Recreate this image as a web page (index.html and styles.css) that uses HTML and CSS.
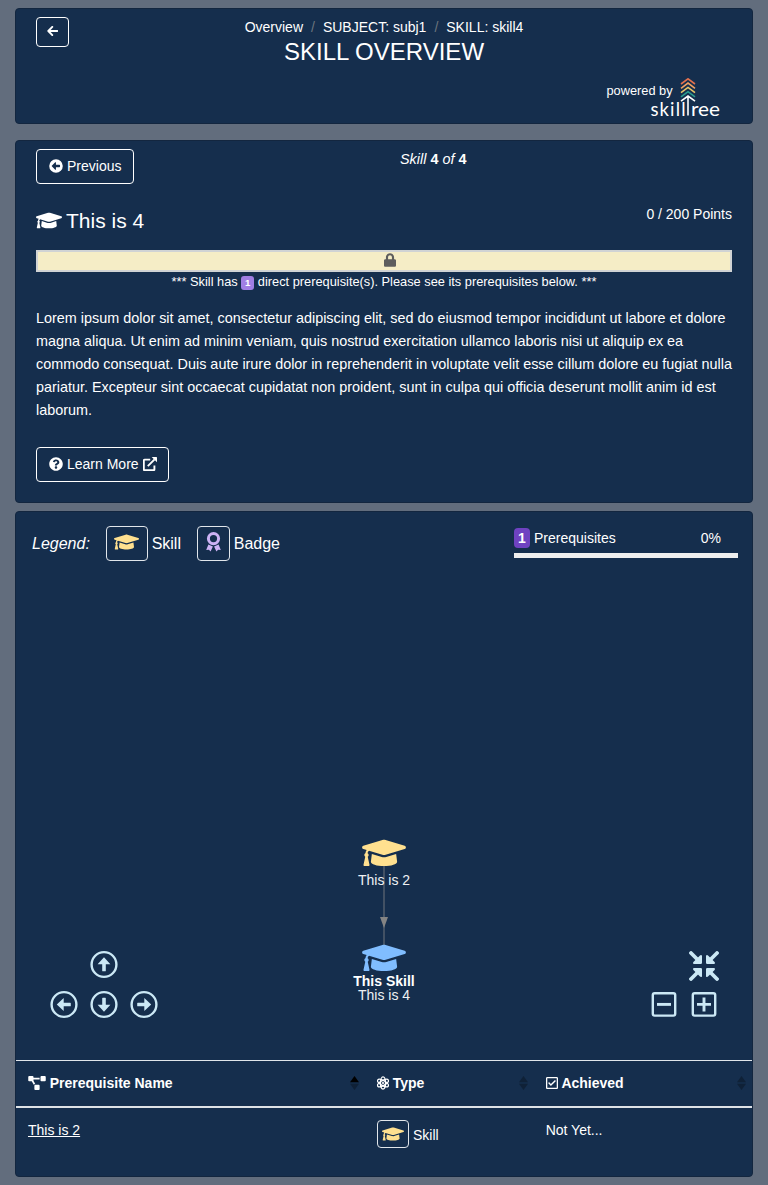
FILE: index.html
```html
<!DOCTYPE html>
<html lang="en">
<head>
<meta charset="utf-8">
<title>Skill Overview</title>
<link rel="stylesheet" href="styles.css">
</head>
<body>
<svg class="defs" aria-hidden="true">
  <symbol id="cap" viewBox="0 0 640 512"><path d="M622.34 153.2L343.4 67.5c-15.2-4.67-31.6-4.67-46.79 0L17.66 153.2c-23.54 7.23-23.54 38.36 0 45.59l48.63 14.94c-10.67 13.19-17.23 29.28-17.88 46.9C38.78 266.15 32 276.11 32 288c0 10.78 5.68 19.85 13.86 25.65L20.33 428.53C18.11 438.52 25.71 448 35.94 448h56.11c10.24 0 17.84-9.48 15.62-19.47L82.14 313.65C90.32 307.85 96 298.78 96 288c0-11.57-6.47-21.25-15.66-26.87.76-15.02 8.44-28.3 20.69-36.72L296.6 284.5c9.06 2.78 26.44 6.25 46.79 0l278.95-85.7c23.55-7.24 23.55-38.36 0-45.6zM352.79 315.09c-28.53 8.76-52.84 3.92-65.59 0l-145.02-44.55L128 384c0 35.35 85.96 64 192 64s192-28.65 192-64l-14.18-113.47-145.03 44.56z"/></symbol>
  <symbol id="circle-arrow" viewBox="0 0 28 28"><circle cx="14" cy="14" r="12.4" fill="none" stroke="currentColor" stroke-width="2.4"/><path d="M6.8 14l6.9-6.4v4.6h6.5q.6 0 .6.6v2.4q0 .6-.6.6h-6.5v4.6z"/></symbol>
</svg>
<main class="page">
  <header class="card header">
    <a class="btn back"><svg width="11" height="10" viewBox="0 0 11 10"><path d="M5.3.9L1.3 5l4 4.1M1.5 5h9" fill="none" stroke="currentColor" stroke-width="1.9" stroke-linecap="round" stroke-linejoin="round"/></svg></a>
    <div class="heading">
      <nav class="crumbs"><span>Overview</span><i>/</i><span>SUBJECT: subj1</span><i>/</i><span>SKILL: skill4</span></nav>
      <h1>SKILL OVERVIEW</h1>
    </div>
    <div class="brand">
      <span>powered by</span>
      <svg width="72" height="40" viewBox="0 0 72 40">
        <g fill="none" stroke-width="1.6">
          <path d="M31 6l7-5.2L45 6" stroke="#e0714f"/>
          <path d="M31 10.3l7-5.2 7 5.2" stroke="#f0a062"/>
          <path d="M31 14.6l7-5.2 7 5.2" stroke="#e8c569"/>
          <path d="M31 18.9l7-5.2 7 5.2" stroke="#2a9d8f"/>
          <path d="M31 23.2l7-5.2 7 5.2M38 18v19.5" stroke="#fff"/>
        </g>
        <text x="0.5" y="37.5" textLength="35" lengthAdjust="spacing">skill</text>
        <text x="41" y="37.5" textLength="29" lengthAdjust="spacingAndGlyphs">ree</text>
      </svg>
    </div>
  </header>

  <section class="card detail">
    <div class="pager">
      <a class="btn"><svg width="14" height="14" viewBox="0 0 512 512"><path fill-rule="evenodd" d="M256 8a248 248 0 1 0 0 496a248 248 0 1 0 0-496zM102 248L228 122q22-16 26 8v80h126q24 0 24 24v44q0 24-24 24H254v80q-4 24-26 8L102 264q-8-8 0-16z"/></svg>Previous</a>
      <div class="position"><em>Skill</em> <b>4</b> <em>of</em> <b>4</b></div>
    </div>
    <div class="title-row">
      <h2><svg width="26" height="21"><use href="#cap"/></svg>This is 4</h2>
      <span>0 / 200 Points</span>
    </div>
    <div class="locked"><svg width="12" height="14" viewBox="0 0 448 512"><path d="M400 224h-24v-72C376 68.2 307.8 0 224 0S72 68.2 72 152v72H48c-26.5 0-48 21.5-48 48v192c0 26.5 21.5 48 48 48h352c26.5 0 48-21.5 48-48V272c0-26.5-21.5-48-48-48zm-104 0H152v-72c0-39.7 32.3-72 72-72s72 32.3 72 72v72z"/></svg></div>
    <p class="lock-note">*** Skill has <span class="count">1</span> direct prerequisite(s). Please see its prerequisites below. ***</p>
    <p class="description">Lorem ipsum dolor sit amet, consectetur adipiscing elit, sed do eiusmod tempor incididunt ut labore et dolore magna aliqua. Ut enim ad minim veniam, quis nostrud exercitation ullamco laboris nisi ut aliquip ex ea commodo consequat. Duis aute irure dolor in reprehenderit in voluptate velit esse cillum dolore eu fugiat nulla pariatur. Excepteur sint occaecat cupidatat non proident, sunt in culpa qui officia deserunt mollit anim id est laborum.</p>
    <a class="btn learn"><svg width="14" height="14" viewBox="0 0 512 512"><path d="M504 256c0 136.997-111.043 248-248 248S8 392.997 8 256C8 119.083 119.043 8 256 8s248 111.083 248 248zM262.655 90c-54.497 0-89.255 22.957-116.549 63.758-3.536 5.286-2.353 12.415 2.715 16.258l34.699 26.31c5.205 3.947 12.621 3.008 16.665-2.122 17.864-22.658 30.113-35.797 57.303-35.797 20.429 0 45.698 13.148 45.698 32.958 0 14.976-12.363 22.667-32.534 33.976C247.128 238.528 216 254.941 216 296v4c0 6.627 5.373 12 12 12h56c6.627 0 12-5.373 12-12v-1.333c0-28.462 83.186-29.647 83.186-106.667 0-58.002-60.165-102-116.531-102zM256 338c-25.365 0-46 20.635-46 46 0 25.364 20.635 46 46 46s46-20.636 46-46c0-25.365-20.635-46-46-46z"/></svg>Learn More<svg width="14" height="14" viewBox="0 0 14 14"><path d="M7.2 2.6H1.6q-.8 0-.8.8v9q0 .8.8.8h9q.8 0 .8-.8V8.6M4.8 9.2L11.6 2.4" fill="none" stroke="currentColor" stroke-width="1.9"/><path d="M8.7 0h4.7q.6 0 .6.6v4.7z"/></svg></a>
  </section>

  <section class="card deps">
    <div class="summary">
      <div class="legend">
        <em>Legend:</em>
        <span class="btn tile skill"><svg width="25" height="20"><use href="#cap"/></svg></span><span>Skill</span>
        <span class="btn tile badge"><svg width="15" height="20" viewBox="0 0 15 20"><circle cx="7.5" cy="6.6" r="5.1" fill="none" stroke="currentColor" stroke-width="3"/><path d="M2.4 12.6l4.5 1.8-2.3 5.1-1.7-1.8-2.7.2zM12.6 12.6l-4.5 1.8 2.3 5.1 1.7-1.8 2.7.2z"/></svg></span><span>Badge</span>
      </div>
      <div class="progress">
        <div class="progress-text"><span class="total">1</span><span>Prerequisites</span><span class="percent">0%</span></div>
        <div class="bar"></div>
      </div>
    </div>

    <div class="graph">
      <svg class="edge" width="10" height="92" viewBox="0 0 10 92"><path d="M5 0v92" stroke="#525e6d" stroke-width="1.5"/><path d="M1 55h8L5 66z" fill="#848484"/></svg>
      <div class="node first"><svg width="44" height="35" viewBox="0 0 44 35"><use href="#cap" y=".4" width="44" height="35"/></svg><span>This is 2</span></div>
      <div class="node second"><svg width="44" height="35" viewBox="0 0 44 35"><use href="#cap" y=".4" width="44" height="35"/></svg><b>This Skill</b><span>This is 4</span></div>
      <div class="pan">
        <svg class="up"><use href="#circle-arrow"/></svg>
        <svg class="left"><use href="#circle-arrow"/></svg>
        <svg class="down"><use href="#circle-arrow"/></svg>
        <svg class="right"><use href="#circle-arrow"/></svg>
      </div>
      <div class="zoom">
        <svg class="fit" width="30" height="30" viewBox="0 0 30 30"><g id="inward"><path d="M2 2l7 7" stroke="currentColor" stroke-width="3.8" stroke-linecap="round"/><path d="M4.6 13h7.2q1.2 0 1.2-1.2V4.6q-1-1.2-2-.2L4.4 11q-1 1 .2 2z"/></g><use href="#inward" transform="matrix(-1 0 0 1 30 0)"/><use href="#inward" transform="matrix(1 0 0 -1 0 30)"/><use href="#inward" transform="matrix(-1 0 0 -1 30 30)"/></svg>
        <svg class="minus" width="26" height="26" viewBox="0 0 26 26"><rect x="1.8" y="2.2" width="22.4" height="22.4" rx="1.8" fill="none" stroke="currentColor" stroke-width="2.4"/><path d="M6 13.4h14" stroke="currentColor" stroke-width="2.9"/></svg>
        <svg class="plus" width="26" height="26" viewBox="0 0 26 26"><rect x="1.8" y="2.2" width="22.4" height="22.4" rx="1.8" fill="none" stroke="currentColor" stroke-width="2.4"/><path d="M6 13.4h14M13 6.4v14" stroke="currentColor" stroke-width="2.9"/></svg>
      </div>
    </div>

    <div class="table">
      <div class="row head">
        <div class="cell"><svg width="18" height="14" viewBox="0 0 640 512"><path d="M384 320H256c-17.67 0-32 14.33-32 32v128c0 17.67 14.33 32 32 32h128c17.67 0 32-14.33 32-32V352c0-17.67-14.33-32-32-32zM192 32c0-17.67-14.33-32-32-32H32C14.33 0 0 14.33 0 32v128c0 17.67 14.33 32 32 32h95.72l73.16 128.04C211.98 300.98 232.4 288 256 288h.28L192 175.51V128h224V64H192V32zM608 0H480c-17.67 0-32 14.33-32 32v128c0 17.67 14.33 32 32 32h128c17.67 0 32-14.33 32-32V32c0-17.67-14.33-32-32-32z"/></svg>Prerequisite Name<svg class="sort asc" width="9" height="14" viewBox="0 0 8 14" preserveAspectRatio="none"><path class="sort-up" d="M0 6.3L4 0l4 6.3z"/><path d="M0 7.7h8L4 14z"/></svg></div>
        <div class="cell"><svg width="12" height="14" viewBox="0 0 12 14"><g fill="none" stroke="currentColor" stroke-width="1.3"><ellipse cx="6" cy="7" rx="2.5" ry="6.1"/><ellipse cx="6" cy="7" rx="2.5" ry="6.1" transform="rotate(60 6 7)"/><ellipse cx="6" cy="7" rx="2.5" ry="6.1" transform="rotate(120 6 7)"/></g><circle cx="6" cy="7" r="1.1"/></svg>Type<svg class="sort" width="9" height="14" viewBox="0 0 8 14" preserveAspectRatio="none"><path d="M0 6.3L4 0l4 6.3zM0 7.7h8L4 14z"/></svg></div>
        <div class="cell"><svg width="12" height="14" viewBox="0 0 448 512"><path d="M400 32H48C21.49 32 0 53.49 0 80v352c0 26.51 21.49 48 48 48h352c26.51 0 48-21.49 48-48V80c0-26.51-21.49-48-48-48zm0 400H48V80h352v352zm-35.864-241.724L191.547 361.48c-4.705 4.667-12.303 4.637-16.97-.068l-90.781-91.516c-4.667-4.705-4.637-12.303.069-16.971l22.719-22.536c4.705-4.667 12.303-4.637 16.97.069l59.792 60.277 141.352-140.216c4.705-4.667 12.303-4.637 16.97.068l22.536 22.718c4.667 4.706 4.637 12.304-.068 16.971z"/></svg>Achieved<svg class="sort" width="9" height="14" viewBox="0 0 8 14" preserveAspectRatio="none"><path d="M0 6.3L4 0l4 6.3zM0 7.7h8L4 14z"/></svg></div>
      </div>
      <div class="row">
        <div class="cell"><a class="link">This is 2</a></div>
        <div class="cell type"><span class="btn tile small skill"><svg width="22" height="18"><use href="#cap"/></svg></span><span>Skill</span></div>
        <div class="cell">Not Yet...</div>
      </div>
    </div>
  </section>
</main>
</body>
</html>
```
FILE: styles.css
```css
* { box-sizing: border-box; }
body {
  margin: 0;
  background: #626d7d;
  color: #fff;
  font: 14px/21px "Liberation Sans", Arial, sans-serif;
}
svg { fill: currentColor; flex: none; display: block; }
h1, h2, p { margin: 0; font-weight: 400; }
.defs { position: absolute; width: 0; height: 0; }
.page { padding: 8px 15px; display: flex; flex-direction: column; }
.card {
  background: #152e4d;
  border: 1px solid #13263f;
  border-radius: 4px;
}
.btn {
  display: inline-flex;
  align-items: center;
  gap: 4px;
  height: 35px;
  padding: 0 12px 1px;
  border: 1px solid #fff;
  border-radius: 4px;
  white-space: nowrap;
}

.header {
  height: 116px;
  padding: 8px 20px 0;
  display: grid;
  grid-template-columns: 33px 1fr 33px;
  grid-template-rows: 60px 40px;
}
.back { width: 33px; height: 30px; padding: 0 0 2px; justify-content: center; }
.heading { text-align: center; }
.crumbs { display: flex; justify-content: center; gap: 8px; }
.crumbs i { color: #6c757d; font-style: normal; }
h1 { font-size: 24px; line-height: 27px; }
.brand {
  grid-column: 1 / -1;
  display: flex;
  justify-content: flex-end;
  padding: 1px 10px 0 0;
  font-size: 12.8px;
}
.brand span { padding-top: 2px; margin-right: -22.6px; }
.brand text { font: 18.5px Lato, sans-serif; }

.detail { margin-top: 16px; height: 363px; padding: 8px 20px 0; }
.pager { display: flex; height: 57px; }
.pager .btn { width: 98px; margin-right: 266px; }
.position { font-size: 14.4px; }
.title-row { display: flex; justify-content: space-between; height: 44px; }
h2 { display: flex; align-items: center; gap: 4px; height: 28px; font-size: 21px; }
h2 svg { margin-top: 1px; }
.title-row span { line-height: 16px; }
.locked {
  display: flex;
  justify-content: center;
  height: 22px;
  padding: 1px 0 0 12px;
  background: #f5edc6;
  border: 2px solid #d0d3d4;
  color: #5d5d5d;
}
.lock-note { height: 35px; font-size: 12.8px; line-height: 20px; text-align: center; }
.count {
  display: inline-block;
  width: 13px;
  height: 14px;
  margin: -4px 0;
  background: #a17fe4;
  border-radius: 3px;
  font-size: 9.6px;
  font-weight: 700;
  line-height: 14px;
}
.description { margin-bottom: 25px; font-size: 14.4px; line-height: 23px; }
.learn { width: 133px; padding-right: 11px; }

.deps { margin-top: 8px; height: 666px; }
.summary { display: flex; justify-content: space-between; padding: 14px 14px 0 16px; height: 62px; }
.legend { display: flex; align-items: center; height: 35px; gap: 3.9px; font-size: 16px; }
.tile { padding: 0; justify-content: center; border-color: #e1e6eb; }
.legend .tile { margin-left: 12px; }
.legend .skill { width: 42px; }
.legend .badge { width: 33px; color: #cdb2f4; padding-bottom: 3px; }
.skill { color: #ffe08f; }
.legend .skill { padding-bottom: 3px; }
.progress { width: 224px; padding-top: 2px; }
.progress-text { display: flex; gap: 4px; line-height: 20px; }
.total { width: 16px; height: 20px; border-radius: 4px; background: #6f42c1; font-weight: 700; text-align: center; }
.percent { margin: 0 17px 0 auto; }
.bar { height: 5px; margin-top: 5px; background: #eee; }

.graph { position: relative; height: 486px; color: #cbe8f5; }
.node {
  position: absolute;
  left: 318px;
  width: 100px;
  display: flex;
  flex-direction: column;
  align-items: center;
  color: #eef1f4;
  line-height: 14px;
}
.node b { color: #fff; }
.first { top: 261px; }
.first svg { color: #ffe08f; margin-bottom: 3px; }
.second { top: 366px; }
.second svg { color: #80bdff; margin-bottom: -1px; }
.edge { position: absolute; left: 363px; top: 288px; }
.pan, .zoom {
  position: absolute;
  top: 376px;
  display: grid;
}
.pan { left: 34px; grid-template: repeat(2, 28px) / repeat(3, 28px); gap: 12px; transform: translateY(.5px); }
.pan svg { width: 28px; height: 28px; }
.up { grid-column: 2; transform: rotate(90deg); }
.left { grid-row: 2; grid-column: 1; }
.down { grid-row: 2; grid-column: 2; transform: rotate(-90deg); }
.right { grid-row: 2; grid-column: 3; transform: rotate(180deg); }
.zoom { right: 33px; padding-top: 1px; grid-template: 30px 26px / 26px 30px; gap: 10.4px 12px; place-items: center; }
.fit { grid-column: 2; }

.row { display: grid; grid-template-columns: 349px 169px 218px; }
.cell { display: flex; gap: 4px; padding: 12px 12px 0; }
.cell:last-child { padding-left: 11.7px; }
.head { height: 48px; border-top: 1px solid #e1e6eb; border-bottom: 2px solid #dee2e6; font-weight: 700; }
.head .cell { align-items: center; gap: 3.7px; height: 45px; padding-top: 0; padding-right: 6px; }
.head .cell > svg:first-child { margin-top: -2px; }
.head .sort { margin: -2px 0 0 auto; color: #0f2137; }
.asc .sort-up { fill: #000; }
.link { text-decoration: underline; }
.row .small { width: 32px; height: 28px; padding-bottom: 1px; }
.type { align-items: center; }
.type span:last-child { padding-top: 2px; }
```
